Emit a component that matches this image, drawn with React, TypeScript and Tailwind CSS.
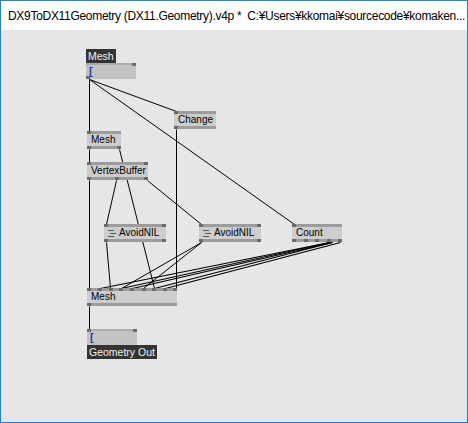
import React from "react";

type NodeProps = {
  x: number;
  y: number;
  w: number;
  label: string;
  ins: number[];
  outs: number[];
  icon?: boolean;
};

const OX = 1;
const OY = 30;

function Pin({ left, top }: { left: number; top: boolean }) {
  return (
    <div
      className={`absolute w-[4px] h-[3px] bg-[#6a6a6a] ${top ? "top-0" : "bottom-0"}`}
      style={{ left }}
    />
  );
}

function Node({ x, y, w, label, ins, outs, icon }: NodeProps) {
  return (
    <div
      className="absolute h-[18px] flex flex-col bg-[#cdcdcd]"
      style={{ left: x - OX, top: y - OY, width: w }}
    >
      <div className="h-[3px] bg-[#9c9c9c]" />
      <div className="flex-1 flex items-center pl-[4px] gap-[3px] text-[10px] leading-none text-black font-['Liberation_Sans',Arial,sans-serif]">
        {icon && (
          <svg width="8" height="7" viewBox="0 0 8 7" className="shrink-0">
            <rect x="0" y="0" width="6" height="1" fill="#555" />
            <rect x="2" y="3" width="6" height="1" fill="#555" />
            <rect x="0" y="6" width="6" height="1" fill="#555" />
          </svg>
        )}
        <span>{label}</span>
      </div>
      <div className="h-[3px] bg-[#9c9c9c]" />
      {ins.map((p) => (
        <Pin key={"i" + p} left={p} top />
      ))}
      {outs.map((p) => (
        <Pin key={"o" + p} left={p} top={false} />
      ))}
    </div>
  );
}

function IOBox({ x, y, label, labelTop }: { x: number; y: number; label: string; labelTop: boolean }) {
  const box = (
    <div className="relative w-[50px] h-[16px] bg-[#c3c3c3]">
      <div className="absolute top-0 left-0 right-0 h-[2px] bg-[#ababab]" />
      <div className="absolute top-0 right-0 w-[4px] h-[3px] bg-[#6a6a6a]" />
      {!labelTop && <div className="absolute top-0 left-0 w-[4px] h-[3px] bg-[#6a6a6a]" />}
      {labelTop && <div className="absolute bottom-0 left-0 w-[4px] h-[3px] bg-[#6a6a6a]" />}
      <span className="absolute left-[3px] top-[3px] text-[11px] leading-none font-bold text-[#1a3ca8] font-['Liberation_Sans',Arial,sans-serif]">
        [
      </span>
    </div>
  );
  const lab = (
    <div className="self-start h-[14px] px-[2px] bg-[#333333] text-[#f4f4f4] text-[10.5px] leading-[14px] font-['Liberation_Sans',Arial,sans-serif] whitespace-nowrap">
      {label}
    </div>
  );
  return (
    <div className="absolute flex flex-col" style={{ left: x - OX, top: y - OY }}>
      {labelTop ? (
        <>
          {lab}
          {box}
        </>
      ) : (
        <>
          {box}
          {lab}
        </>
      )}
    </div>
  );
}

const links: [number, number, number, number, number?][] = [
  [89, 79, 89, 131],
  [89, 79, 176, 111],
  [89, 79, 294, 224],
  [176, 129, 176, 288],
  [89, 149, 89, 162],
  [119, 149, 154, 288],
  [89, 180, 89, 288],
  [116, 180, 106, 224],
  [147, 180, 201, 224],
  [106, 242, 110, 288],
  [201, 242, 143, 288],
  [201, 242, 121, 288],
  [329, 242, 100, 288, 1.2],
  [329, 242, 121, 288, 1.2],
  [332, 242, 132, 288, 1.2],
  [332, 242, 154, 288, 1.2],
  [340, 242, 165, 288, 1.2],
  [89, 306, 89, 329],
];

export default function App() {
  return (
    <div className="w-[468px] h-[423px] border border-[#1883d7] flex flex-col bg-white overflow-hidden">
      <div className="h-[29px] shrink-0 bg-white flex items-center pl-[7px] text-[12px] tracking-[-0.3px] text-black whitespace-nowrap font-['Liberation_Sans',Arial,sans-serif]">
        DX9ToDX11Geometry (DX11.Geometry).v4p *&nbsp;&nbsp;C:¥Users¥kkomai¥sourcecode¥komaken...
      </div>
      <div className="relative flex-1 bg-[#e6e6e6]">
        <svg className="absolute left-0 top-0" width="466" height="392" viewBox="1 30 466 392">
          {links.map(([x1, y1, x2, y2, sw], i) => (
            <line
              key={i}
              x1={x1 + 0.5}
              y1={y1 + 0.5}
              x2={x2 + 0.5}
              y2={y2 + 0.5}
              stroke="#000"
              strokeWidth={sw ?? 1}
            />
          ))}
        </svg>
        <IOBox x={86} y={49} label="Mesh" labelTop />
        <Node x={174} y={111} w={42} label="Change" ins={[0]} outs={[0]} />
        <Node x={87} y={131} w={34} label="Mesh" ins={[0]} outs={[0, 30]} />
        <Node x={87} y={162} w={61} label="VertexBuffer" ins={[0, 57]} outs={[0, 28, 57]} />
        <Node x={104} y={224} w={62} label="AvoidNIL" ins={[0, 58]} outs={[0, 58]} icon />
        <Node x={199} y={224} w={62} label="AvoidNIL" ins={[0, 58]} outs={[0, 58]} icon />
        <Node x={292} y={224} w={50} label="Count" ins={[0]} outs={[0, 12, 23, 35, 46]} />
        <Node x={87} y={288} w={90} label="Mesh" ins={[0, 11, 22, 32, 43, 55, 65, 76, 86]} outs={[0]} />
        <IOBox x={87} y={329} label="Geometry Out" labelTop={false} />
      </div>
    </div>
  );
}
